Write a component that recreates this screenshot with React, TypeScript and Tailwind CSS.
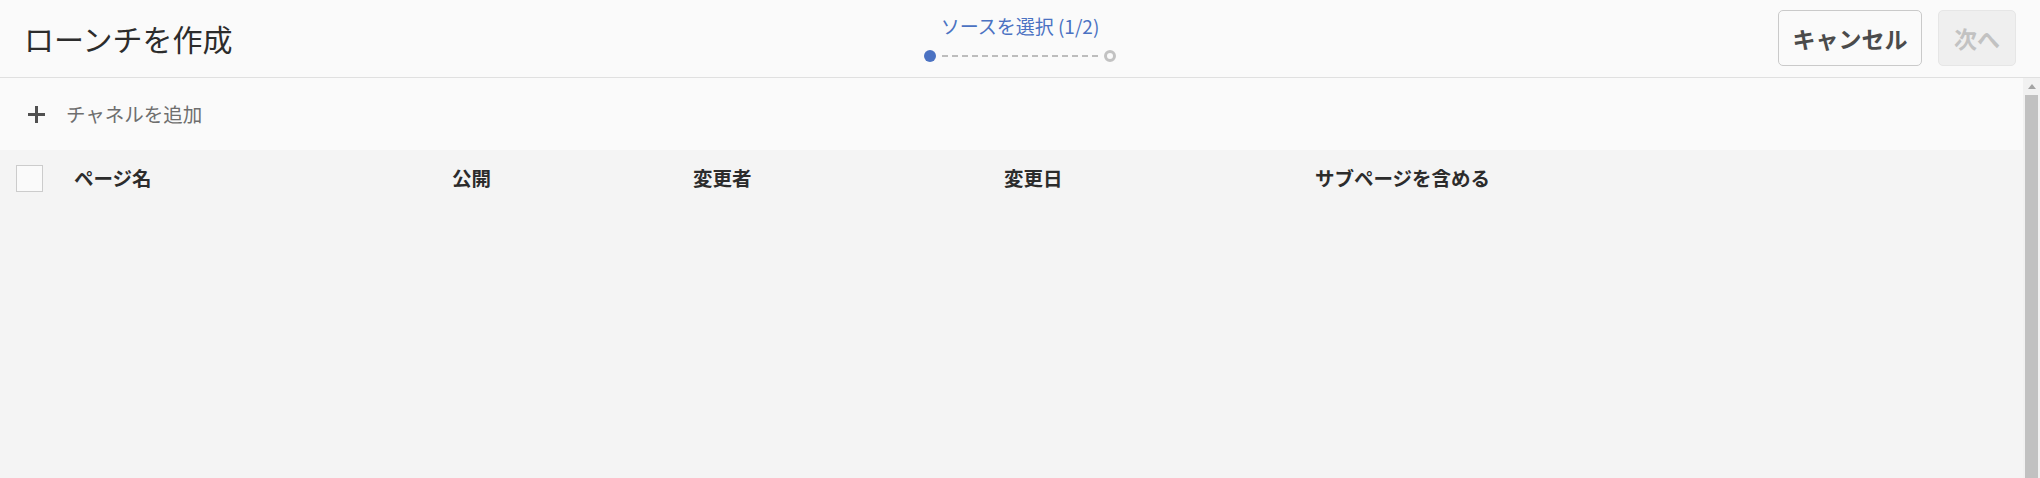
import React from 'react';

const jp = { fontFamily: '"Noto Sans CJK JP", "Noto Sans", sans-serif' };

const columns = [
  { label: 'ページ名', width: 'w-[378px]' },
  { label: '公開', width: 'w-[241px]' },
  { label: '変更者', width: 'w-[311px]' },
  { label: '変更日', width: 'w-[311px]' },
  { label: 'サブページを含める', width: 'flex-1' },
];

const Stepper: React.FC = () => (
  <div className="flex flex-col items-center pt-[13px]">
    <span className="text-[19px] leading-[26px] text-[#4b72c2]">ソースを選択 (1/2)</span>
    <div className="flex items-center mt-[11px]">
      <span className="w-[12px] h-[12px] rounded-full bg-[#4b72c2]" />
      <span className="w-[156px] mx-[6px] border-t-2 border-dashed border-[#bdbdbd]" />
      <span className="w-[12px] h-[12px] rounded-full border-[3px] border-[#c2c2c2]" />
    </div>
  </div>
);

const App: React.FC = () => {
  return (
    <div className="w-[2040px] h-[478px] flex flex-col bg-[#fafafa] overflow-hidden" style={jp}>
      {/* Header */}
      <header className="relative h-[78px] shrink-0 flex items-center justify-between px-[24px] border-b border-[#e0e0e0] bg-[#fafafa]">
        <h1 className="text-[30px] leading-none text-[#2c2c2c] -mt-[2px]">ローンチを作成</h1>
        <div className="absolute left-1/2 top-0 -translate-x-1/2">
          <Stepper />
        </div>
        <div className="flex items-center gap-[16px] -mt-[1px]">
          <button className="h-[56px] w-[144px] rounded-[5px] border border-[#cacaca] bg-[#fafafa] text-[23px] font-bold text-[#4b4b4b]">
            キャンセル
          </button>
          <button className="h-[56px] w-[78px] rounded-[5px] border border-[#e6e6e6] bg-[#efefef] text-[23px] font-bold text-[#c2c2c2]">
            次へ
          </button>
        </div>
      </header>

      {/* Body with scrollbar */}
      <div className="flex flex-1 min-h-0">
        <div className="flex-1 flex flex-col">
          <div className="h-[72px] flex items-center px-[24px] bg-[#fafafa]">
            <svg width="19" height="19" viewBox="0 0 19 19" className="ml-[3px]">
              <path d="M9.5 1v17M1 9.5h17" stroke="#505050" strokeWidth="3" />
            </svg>
            <span className="ml-[20px] text-[19.5px] text-[#6e6e6e]">チャネルを追加</span>
          </div>
          <div className="flex-1 bg-[#f4f4f4]">
            <div className="flex items-center h-[56px] pl-[16px]">
              <span className="w-[27px] h-[27px] border border-[#cccccc] bg-[#fafafa] shrink-0" />
              <div className="flex flex-1 pl-[31px]">
                {columns.map((c) => (
                  <span key={c.label} className={`${c.width} text-[19.5px] font-bold text-[#2c2c2c]`}>
                    {c.label}
                  </span>
                ))}
              </div>
            </div>
          </div>
        </div>
        <div className="w-[17px] flex flex-col bg-[#f1f1f1]">
          <div className="h-[17px] flex items-center justify-center">
            <svg width="8" height="5" viewBox="0 0 8 5">
              <path d="M0 5L4 0L8 5Z" fill="#a3a3a3" />
            </svg>
          </div>
          <div className="flex-1 mx-[2px] bg-[#c1c1c1]" />
        </div>
      </div>
    </div>
  );
};

export default App;
